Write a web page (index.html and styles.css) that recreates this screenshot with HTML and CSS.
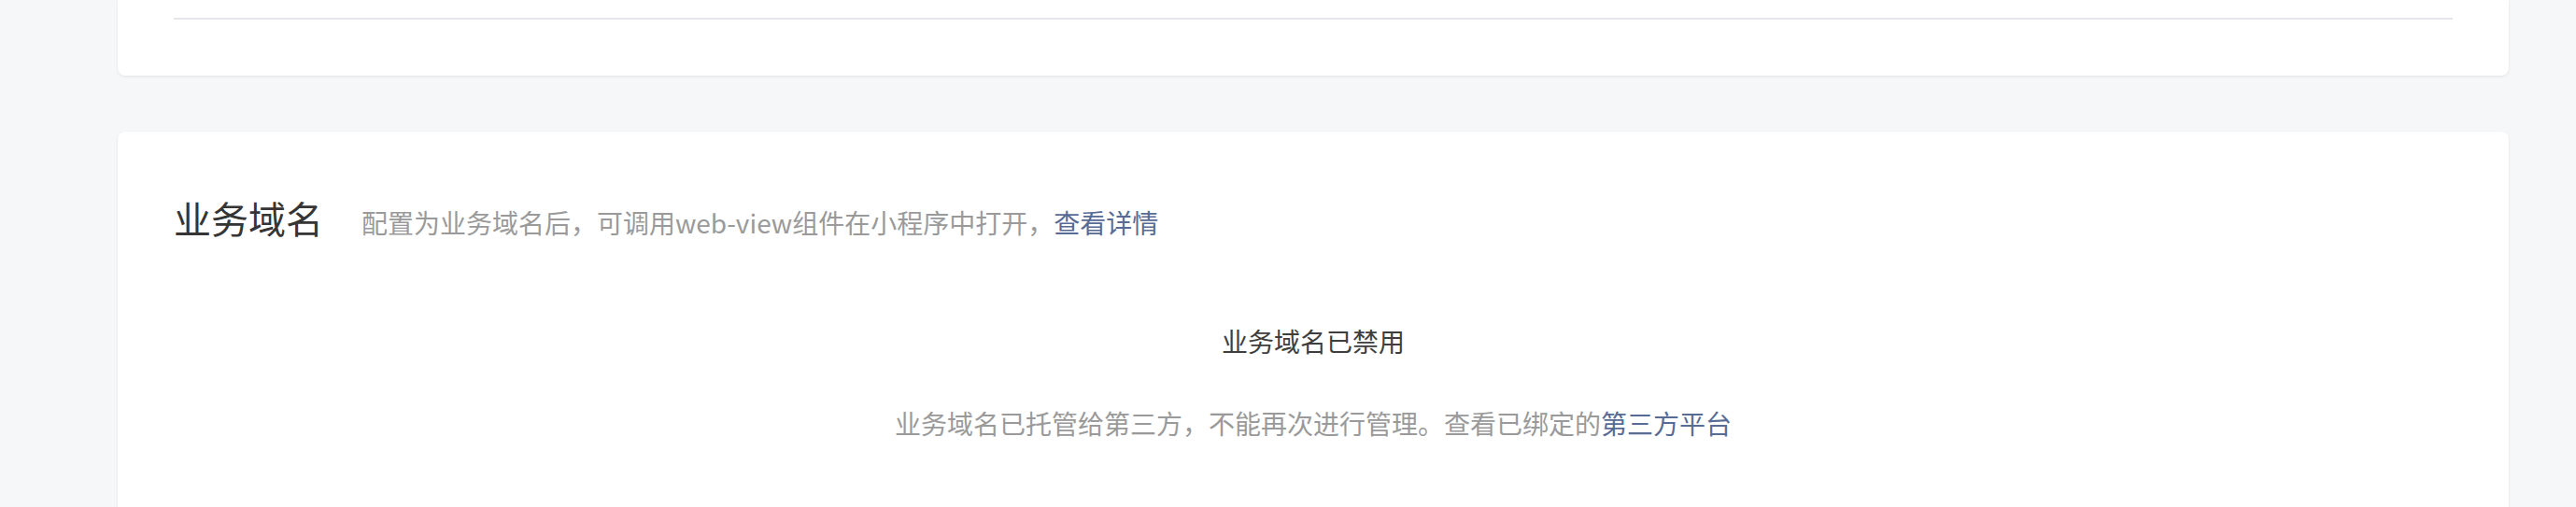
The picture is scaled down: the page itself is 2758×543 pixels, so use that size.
FILE: index.html
```html
<!DOCTYPE html>
<html lang="zh-CN">
<head>
<meta charset="utf-8">
<title>业务域名</title>
<link rel="stylesheet" href="styles.css">
</head>
<body>
<div class="page">
  <section class="card card-prev">
    <div class="divider"></div>
  </section>
  <section class="card card-domain">
    <header class="card-head">
      <h2 class="card-title">业务域名</h2>
      <p class="card-desc">配置为业务域名后，可调用web-view组件在小程序中打开，<a class="link" href="#">查看详情</a></p>
    </header>
    <div class="empty">
      <p class="empty-title">业务域名已禁用</p>
      <p class="empty-desc">业务域名已托管给第三方，不能再次进行管理。查看已绑定的<a class="link" href="#">第三方平台</a></p>
    </div>
  </section>
</div>
</body>
</html>
```

FILE: styles.css
```css
html, body {
  margin: 0;
  padding: 0;
  background: #f6f7f9;
}
body {
  font-family: "Noto Sans CJK SC", "Noto Sans", sans-serif;
  color: #353535;
}
.page {
  width: 2560px;
  padding-left: 126px;
  display: flex;
  flex-direction: column;
  gap: 60px;
}
.card {
  background: #ffffff;
  border-radius: 8px;
  box-shadow: 0 1px 3px rgba(0, 0, 0, 0.09);
  padding: 0 60px;
}
.card-prev {
  border-top-left-radius: 0;
  border-top-right-radius: 0;
  padding-top: 19px;
  padding-bottom: 60px;
}
.divider {
  height: 2px;
  background: #e6e6eb;
}
.card-domain {
  padding-top: 64px;
  padding-bottom: 120px;
}
.card-head {
  display: flex;
  align-items: baseline;
  line-height: 56px;
}
.card-title {
  margin: 0;
  font-size: 40px;
  font-weight: 400;
  color: #353535;
}
.card-desc {
  margin: 0 0 0 41px;
  font-size: 28px;
  color: #9a9a9a;
}
.link {
  color: #576b95;
  text-decoration: none;
}
.empty {
  padding-top: 79px;
  text-align: center;
}
.empty-title {
  margin: 0;
  font-size: 28px;
  line-height: 40px;
  color: #3e3e3e;
}
.empty-desc {
  margin: 48px 0 0;
  font-size: 28px;
  line-height: 40px;
  color: #9a9a9a;
}
```
